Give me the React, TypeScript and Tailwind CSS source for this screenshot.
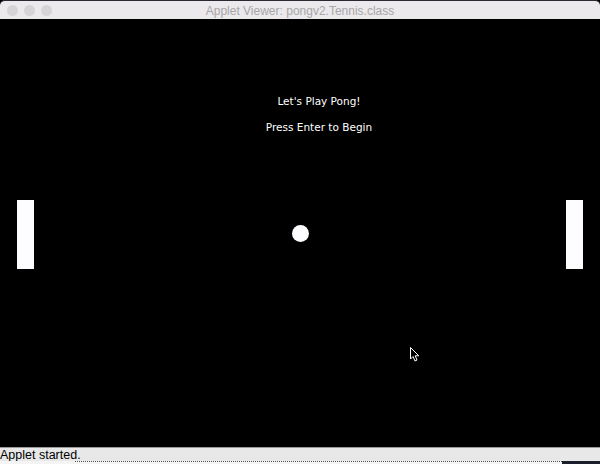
import React from "react";

const Light = () => (
  <div className="w-[11px] h-[11px] rounded-full bg-[#d6d4d6]" />
);

export default function App() {
  return (
    <div className="w-[600px] h-[464px] flex flex-col overflow-hidden bg-black font-['DejaVu_Sans',sans-serif]">
      {/* window title */}
      <div className="relative h-[19px] flex items-center bg-[#ebe9eb] border-t border-[#2a2a33] rounded-t-[5px]">
        <div className="flex gap-[6px] pl-[7px]">
          <Light />
          <Light />
          <Light />
        </div>
        <div className="absolute inset-0 flex items-center justify-center text-[12px] text-[#a8a6a8] font-['Liberation_Sans',sans-serif] pt-[1px]">
          Applet Viewer: pongv2.Tennis.class
        </div>
      </div>

      {/* game canvas */}
      <div className="relative flex-1 bg-black">
        <div className="absolute left-[38px] right-0 top-[75px] text-center text-white text-[10.5px]">
          Let's Play Pong!
        </div>
        <div className="absolute left-[38px] right-0 top-[101px] text-center text-white text-[10.5px]">
          Press Enter to Begin
        </div>
        <div className="absolute left-[17px] top-[181px] w-[17px] h-[69px] bg-[#fdfcff]" />
        <div className="absolute left-[566px] top-[181px] w-[17px] h-[69px] bg-[#fdfcff]" />
        <div className="absolute left-[292px] top-[206px] w-[17px] h-[17px] rounded-full bg-[#fdfcff]" />
        <svg
          className="absolute left-[409px] top-[327px]"
          width="12"
          height="17"
          viewBox="0 0 12 17"
        >
          <path
            d="M1.5 1.5 L1.5 13 L4 10.5 L6 15 L8 14 L6.2 9.8 L9.8 9.8 Z"
            fill="#000"
            stroke="#fff"
            strokeWidth="1"
            strokeLinejoin="round"
          />
        </svg>
      </div>

      {/* status bar */}
      <div className="h-[14px] bg-[#e9e8e9] border-t border-[#9a9a9a] flex items-center text-[12.5px] leading-none text-black font-['Liberation_Sans',sans-serif] pt-[2px]">
        Applet started.
      </div>
      <div className="h-[3px] bg-[#f4f4f4] flex">
        <div className="w-[75px]" />
        <div className="flex-1 border-t border-dotted border-[#555]" />
        <div className="w-[38px] bg-[#1a1f2b]" />
      </div>
    </div>
  );
}
